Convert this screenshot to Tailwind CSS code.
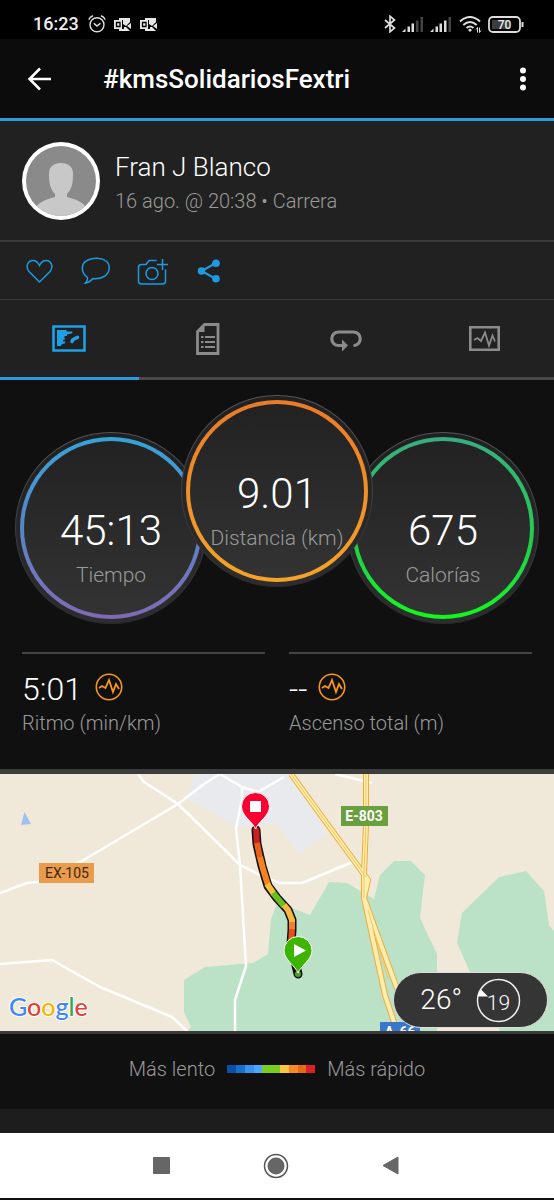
<!DOCTYPE html>
<html lang="es">
<head>
  <meta charset="UTF-8" />
  <meta name="viewport" content="width=device-width, initial-scale=1.0" />
  <title>#kmsSolidariosFextri</title>
  <script src="https://cdn.jsdelivr.net/npm/@tailwindcss/browser@4"></script>
</head>
<body class="bg-black font-['Roboto',sans-serif] font-light text-white min-h-screen flex flex-col">

  <!-- Status bar -->
  <div class="h-[39px] pt-[9px] pl-[33px] pr-[30px] flex items-center justify-between">
    <div class="flex items-center">
      <span class="text-[18px] font-medium leading-5 text-[#eee]">16:23</span>
      <svg class="ml-[9px] w-[18px] h-[18px]" viewBox="0 0 18 18" fill="none" stroke="#ddd" stroke-width="1.4" stroke-linecap="round">
        <circle cx="9" cy="9.7" r="7" />
        <path d="M1 4.2Q2.2 1.8 4.6 1M17 4.2Q15.8 1.8 13.4 1M6.2 8.6L9 11L12 8.6" />
      </svg>
      <svg class="ml-[8px] w-[18px] h-[15px]" viewBox="0 0 18 15">
        <path d="M5 1h11v4l-4 4-3-2V3H5zM17 6v6l-4-3zM5 12h5v-2l2 0 4 4H5z" fill="#e6e6e6" />
        <path d="M0 3h8v9H0z" fill="#e6e6e6" />
        <path d="M2.500 5.500h3.500v4H2.500z" fill="none" stroke="#000" stroke-width="1.300" />
      </svg>
      <svg class="ml-[8px] w-[18px] h-[15px]" viewBox="0 0 18 15">
        <path d="M5 1h11v4l-4 4-3-2V3H5zM17 6v6l-4-3zM5 12h5v-2l2 0 4 4H5z" fill="#e6e6e6" />
        <path d="M0 3h8v9H0z" fill="#e6e6e6" />
        <path d="M2.500 5.500h3.500v4H2.500z" fill="none" stroke="#000" stroke-width="1.300" />
      </svg>
    </div>
    <div class="flex items-center">
      <svg class="w-[12px] h-[18px]" viewBox="0 0 12 18" fill="none" stroke="#ddd" stroke-width="1.7">
        <path d="M1 5l9.500 8L6 16.800V1.200L10.500 5L1 13" />
      </svg>
      <svg class="ml-[6px] w-[22px] h-[15px]" viewBox="0 0 22 15">
        <path d="M0 15L3.500 11.500V15H0zM5.500 9.500h2.500V15H5.500zM9.500 6.500h2.500V15H9.500z" fill="#ddd" />
        <path d="M14 3.500h2.500V15H14zM18.500 0h2.500V15h-2.500z" fill="#444" />
      </svg>
      <svg class="ml-[6px] w-[22px] h-[15px]" viewBox="0 0 22 15">
        <path d="M0 15L3.500 11.500V15H0zM5.500 9.500h2.500V15H5.500zM9.500 6.500h2.500V15H9.500zM14 3.500h2.500V15H14z" fill="#ddd" />
        <path d="M18.500 0h2.500V15h-2.500z" fill="#444" />
      </svg>
      <svg class="ml-[7px] w-[23px] h-[17px]" viewBox="0 0 23 17" fill="none" stroke="#ddd" stroke-width="2">
        <path d="M1 5.500Q11 -3.500 21 5.500M4.300 9Q11 3 17.700 9M7.500 12Q11 9 14.500 12" />
        <path d="M9 14l2-1.500 2 1.500-2 2z" fill="#ddd" stroke="none" />
        <path d="M18.500 16.500v-5l-1.500 2M20.500 11.500v5l1.500-2" stroke-width="1" />
      </svg>
      <svg class="ml-[6px] w-[36px] h-[17px]" viewBox="0 0 36 17">
        <rect x="1" y="1" width="31" height="15" rx="4" fill="none" stroke="#ddd" stroke-width="1.800" />
        <rect x="4" y="4" width="17" height="9" fill="#3c3c3c" />
        <path d="M33.500 6h2v5h-2z" fill="#ddd" />
        <text x="16.500" y="13" text-anchor="middle" font-size="12" font-weight="500" fill="#eee">70</text>
      </svg>
    </div>
  </div>

  <!-- Title bar -->
  <header class="bg-[#0c0c0c] border-b-3 border-[#2a9ad8] h-[82px] pl-[27px] pr-[26px] flex items-center">
    <button type="button" aria-label="Atrás" class="w-6 h-6">
      <svg viewBox="0 0 24 24" fill="none" stroke="#fff" stroke-width="2.500"><path d="M24 12H3M13 1.500L2.500 12L13 22.500" /></svg>
    </button>
    <h1 class="ml-[52px] flex-1 text-[26px] leading-8 font-medium">#kmsSolidariosFextri</h1>
    <button type="button" aria-label="Más opciones" class="w-[10px] h-6">
      <svg viewBox="0 0 10 24" fill="#fff"><circle cx="5" cy="3.500" r="3" /><circle cx="5" cy="12" r="3" /><circle cx="5" cy="20.500" r="3" /></svg>
    </button>
  </header>

  <!-- Athlete -->
  <section class="bg-[#212121] h-[121px] px-[22px] flex items-center border-b-2 border-[#3a3a3a]">
    <svg class="w-[78px] h-[78px] shrink-0" viewBox="0 0 78 78">
      <defs><clipPath id="face"><circle cx="39" cy="39" r="35" /></clipPath></defs>
      <circle cx="39" cy="39" r="39" fill="#fff" />
      <g clip-path="url(#face)">
        <path d="M0 0h78v78H0z" fill="#8a8a8a" />
        <path d="M39 21c-8 0-12 4-12 11 0 9 1 15 6 20v3c-8 2-16 5-20 11l8 8h36l8-8c-4-6-12-9-20-11v-3c5-5 6-11 6-20 0-7-4-11-12-11z" fill="#c8c8c8" />
      </g>
    </svg>
    <div class="ml-[15px] pt-[5px]">
      <h2 class="text-[26px] leading-8">Fran J Blanco</h2>
      <p class="mt-1 text-[20px] leading-7 text-[#9a9a9a]">16 ago. @ 20:38 • Carrera</p>
    </div>
  </section>

  <!-- Actions -->
  <section class="bg-[#212121] h-[58px] pl-[26px] flex items-center border-b border-[#3a3a3a] text-[#1c9be0]">
    <button type="button" aria-label="Me gusta" class="w-[27px] h-[26px]">
      <svg viewBox="0 0 27 26" fill="none" stroke="currentColor" stroke-width="1.500"><path d="M13.500 24L3 13.500C-1 8 2 2.500 7 2.500c3 0 5 2 6.500 5C15 4.500 17 2.500 20 2.500c5 0 8 5.500 4 11z" /></svg>
    </button>
    <button type="button" aria-label="Comentar" class="ml-[28px] w-[30px] h-[28px]">
      <svg viewBox="0 0 30 28" fill="none" stroke="currentColor" stroke-width="1.500"><path d="M6.500 20.500C-1 15 0 6 7 3c6-3 14-2 18 1 5 4 4 11-1 15-4 2.500-8 3-12 2.500-2 2.500-4 4-7.500 4.500 1.500-1.500 2.500-3 2-5.500z" /></svg>
    </button>
    <button type="button" aria-label="Añadir foto" class="ml-[26px] w-[32px] h-[28px]">
      <svg viewBox="0 0 32 28" fill="none" stroke="currentColor" stroke-width="1.500"><path d="M19.500 3.500H12L9 7.500H4.500q-3 0-3 3V24q0 3 3 3h21q3 0 3-3V12.500M25.500 2v11M20 7.500h11" /><circle cx="15" cy="16.500" r="6" /></svg>
    </button>
    <button type="button" aria-label="Compartir" class="ml-[28px] w-[24px] h-[24px]">
      <svg viewBox="0 0 24 24" fill="currentColor"><path d="M19 4L4.500 12L19 20" fill="none" stroke="currentColor" stroke-width="2" /><circle cx="4.500" cy="12" r="3.800" /><circle cx="19" cy="4.300" r="3.800" /><circle cx="19" cy="19.700" r="3.800" /></svg>
    </button>
  </section>

  <!-- Tabs -->
  <nav class="bg-[#212121] grid grid-cols-4 h-[80px] text-[#8b8b8b]">
    <button type="button" aria-label="Resumen" class="flex items-center justify-center border-b-3 border-[#2a9ad8] text-[#1ea0e6]">
      <svg class="w-[34px] h-[27px]" viewBox="0 0 34 27"><path d="M1.500 1.500h31v24h-31z" fill="none" stroke="currentColor" stroke-width="2.600" /><path d="M5 5h9.500v1.500H20q1.500 1-.5 2l-4.500 1v1.500h-2l-1 1.500 1.500 1.500-2.500 1v1.500h2q1 1-.5 2l-2.500.5-1 2H5z" fill="currentColor" /><path d="M20 16.500L21 14.500 25.500 12.300" fill="none" stroke="currentColor" stroke-width="3.600" stroke-linecap="round" stroke-linejoin="round" /></svg>
    </button>
    <button type="button" aria-label="Estadísticas" class="flex items-center justify-center border-b-3 border-[#4a4a4a]">
      <svg class="w-[24px] h-[32px]" viewBox="0 0 24 32"><path d="M8.500 1.500h13.500v29h-20.500v-22z" fill="none" stroke="currentColor" stroke-width="2.800" /><path d="M8.500 1.500V9H1.500z" fill="currentColor" /><path d="M5 14h2.500M9 14h10M5 19h2.500M9 19h10M5 24h2.500M9 24h10" stroke="currentColor" stroke-width="2.200" /></svg>
    </button>
    <button type="button" aria-label="Vueltas" class="flex items-center justify-center border-b-3 border-[#4a4a4a]">
      <svg class="mt-1 w-[32px] h-[22px]" viewBox="0 0 32 22"><path d="M13 15.500H8.500A6.700 6.700 0 0 1 8.500 2H23.500A6.700 6.700 0 0 1 23.500 15.500" fill="none" stroke="currentColor" stroke-width="3.200" /><path d="M12 9.500L18 15.500L12 21.500z" fill="currentColor" /></svg>
    </button>
    <button type="button" aria-label="Gráficos" class="flex items-center justify-center border-b-3 border-[#4a4a4a]">
      <svg class="w-[31px] h-[25px]" viewBox="0 0 31 25" fill="none" stroke="currentColor"><path d="M1.300 1.300h28.400v22.400H1.300z" stroke-width="2.600" /><path d="M5 14l3.500-2 3.500 3 4-8.500 4 13 3.500-10 2.500 6" stroke-width="1.800" /></svg>
    </button>
  </nav>

  <!-- Gauges, the middle one raised over its neighbours -->
  <main class="bg-[#101010] grow">
    <div class="pt-[15px] flex items-start justify-center">
      <div class="mt-[37px] size-48 shrink-0 rounded-full p-px bg-linear-to-b from-[#555354] to-[#28282a]">
        <div class="size-full rounded-full p-[4px] bg-linear-to-b from-[#202021] to-[#2d2d2f]">
          <div class="size-full rounded-full p-[4px] bg-linear-to-b from-[#35a3d8] via-[#5585c8] to-[#8068b4]">
            <div class="size-full rounded-full pt-[68px] text-center bg-linear-to-b from-[#222] to-[#323332]">
              <div class="text-[42px] leading-[44px]">45:13</div>
              <div class="mt-[8px] text-[21px] leading-7 text-[#9a9a9a]">Tiempo</div>
            </div>
          </div>
        </div>
      </div>
      <div class="z-10 -mx-[26px] size-48 shrink-0 rounded-full p-px bg-linear-to-b from-[#55565a] to-[#28282a]">
        <div class="size-full rounded-full p-[4px] bg-linear-to-b from-[#202021] to-[#2d2d2f]">
          <div class="size-full rounded-full p-[4px] bg-linear-to-b from-[#ea7a28] to-[#f5a328]">
            <div class="size-full rounded-full pt-[68px] text-center bg-linear-to-b from-[#222] to-[#323332]">
              <div class="text-[42px] leading-[44px]">9.01</div>
              <div class="mt-[8px] text-[21px] leading-7 text-[#9a9a9a] whitespace-nowrap">Distancia (km)</div>
            </div>
          </div>
        </div>
      </div>
      <div class="mt-[37px] size-48 shrink-0 rounded-full p-px bg-linear-to-b from-[#555354] to-[#28282a]">
        <div class="size-full rounded-full p-[4px] bg-linear-to-b from-[#202021] to-[#2d2d2f]">
          <div class="size-full rounded-full p-[4px] bg-linear-to-b from-[#38ac80] via-[#20d045] via-60% to-[#10f818]">
            <div class="size-full rounded-full pt-[68px] text-center bg-linear-to-b from-[#222] to-[#323332]">
              <div class="text-[42px] leading-[44px]">675</div>
              <div class="mt-[8px] text-[21px] leading-7 text-[#9a9a9a]">Calorías</div>
            </div>
          </div>
        </div>
      </div>
    </div>

    <div class="mt-[28px] px-[22px] pb-[32px] grid grid-cols-2 gap-6">
      <div class="border-t-2 border-[#444] pt-[15px]">
        <div class="flex items-center text-[32px] leading-10">5:01
          <svg class="ml-[13px] mb-1 w-[28px] h-[28px]" viewBox="0 0 28 28" fill="none" stroke="#f7981d"><circle cx="14" cy="14" r="12.700" stroke-width="1.600" /><path d="M4 15l3-2 3.500 2L14 7l4 12 3-8 3 5" stroke-width="1.800" /></svg>
        </div>
        <div class="text-[20px] leading-7 text-[#9a9a9a]">Ritmo (min/km)</div>
      </div>
      <div class="border-t-2 border-[#444] pt-[15px]">
        <div class="flex items-center text-[32px] leading-10">--
          <svg class="ml-[11px] mb-1 w-[28px] h-[28px]" viewBox="0 0 28 28" fill="none" stroke="#f7981d"><circle cx="14" cy="14" r="12.700" stroke-width="1.600" /><path d="M4 15l3-2 3.500 2L14 7l4 12 3-8 3 5" stroke-width="1.800" /></svg>
        </div>
        <div class="text-[20px] leading-7 text-[#9a9a9a]">Ascenso total (m)</div>
      </div>
    </div>
  </main>

  <!-- Map -->
  <section class="relative border-t-5 border-b-3 border-[#3c3c3c]">
    <svg class="block w-full h-[257px]" viewBox="0 0 554 257" preserveAspectRatio="xMidYMid slice" fill="none">
      <path d="M0 0h554v257H0z" fill="#f0e9d9" />
      <path d="M194 0L188 26L212 38L236 53L277 50L299 80L326 59L292 0z" fill="#e8eaee" />
      <path d="M24.500 38L21 51L31 50z" fill="#a3bff0" />
      <!-- woods -->
      <g fill="#bbe2c6">
        <path d="M277 130L271 145L268 180L253 189L205 193L184 206V238L191 253L188 257H437V180L420 144L425 101L411 87H394L380 101L374 125L347 109L329 108L310 141L297 136z" />
        <path d="M554 157L549 151L544 117L526 97L499 103L462 139L457 169L470 198L500 257H554z" />
      </g>
      <!-- minor roads -->
      <g stroke="#fff" stroke-width="2.500" stroke-linejoin="round">
        <path d="M138 0L144 8L178 30L240 91L262 102L280 109L302 109L355 87" />
        <path d="M0 119L27 109L38 108L82 87L178 30L204 10L220 0L242 13L258 18L284 3" />
        <path d="M242 12L242 25L236 55L240 91L246 192L235 226V257" />
        <path d="M0 190L52 186L100 213L172 243L187 257M335 0L372 9" />
      </g>
      <!-- motorways -->
      <g stroke-linejoin="round">
        <path d="M291 0L312 29L355 88L368 106L364 124M366 0V50L364 100V124L385 221L397 257M364 124L388 190L402 228" stroke="#f0ab3a" stroke-width="6" />
        <path d="M291 0L312 29L355 88L368 106L364 124M366 0V50L364 100V124L385 221L397 257M364 124L388 190L402 228" stroke="#fdeeb0" stroke-width="4" />
        <path d="M291 0L312 29L355 88L366 103M366 0V50L364 100V124M368 136L388 205" stroke="#f3c65a" stroke-width="1" />
      </g>
      <!-- track coloured by pace -->
      <g stroke-linejoin="round">
        <path d="M256 56L257 70L262 92L268 112L277 124L288 136L292 146L292 156L291 170L298 200" stroke="#111" stroke-width="9" stroke-linecap="round" />
        <path d="M256 54L257 70" stroke="#cc2020" stroke-width="6" />
        <path d="M257 69L260 84" stroke="#e6601a" stroke-width="6" />
        <path d="M260 83L263 95L268 111" stroke="#f5821f" stroke-width="6" />
        <path d="M267 110L274 120" stroke="#f9bd38" stroke-width="6" />
        <path d="M273 119L284 132" stroke="#6abf1c" stroke-width="6" />
        <path d="M284 131L288 136L292 146V149" stroke="#f9b640" stroke-width="6" />
        <path d="M292 148V156" stroke="#f08030" stroke-width="6" />
        <path d="M292 155L291 170" stroke="#e6501a" stroke-width="6" />
        <circle cx="298" cy="200" r="3" fill="#55a02a" />
      </g>
      <path d="M255.500 55C253 48 241.500 42 241.500 32.500a14 14 0 0 1 28 0C269.500 42 258 48 255.500 55z" fill="#fa0030" stroke="#fff" stroke-width="1" />
      <path d="M250 27h11v11h-11z" fill="#fff" />
      <path d="M298 199C295.500 192 284 186 284 176.500a14 14 0 0 1 28 0C312 186 300.500 192 298 199z" fill="#3cb400" stroke="#fff" stroke-width="1" />
      <path d="M294 170v13l12-6.500z" fill="#fff" />
      <!-- road shields -->
      <g font-size="14" font-weight="500" text-anchor="middle">
        <path d="M39 89h55v20H39z" fill="#eb9b4c" />
        <text x="67" y="104" font-weight="400" fill="#3b2a14">EX-105</text>
        <path d="M341 32h47v20h-47z" fill="#699f3e" />
        <text x="364" y="47" font-weight="700" fill="#fff">E-803</text>
        <path d="M380 248h40v9h-40z" fill="#3a76c9" />
        <text x="400" y="263" font-weight="700" fill="#fff">A-66</text>
      </g>
    </svg>
    <div class="absolute left-[9px] bottom-[9px] font-['Lato',sans-serif] font-medium text-[25px] leading-8 [-webkit-text-stroke:2px_white] [paint-order:stroke_fill]"><span class="text-[#4285f4]">G</span><span class="text-[#db4437]">o</span><span class="text-[#f4b400]">o</span><span class="text-[#4285f4]">g</span><span class="text-[#34a853]">l</span><span class="text-[#db4437]">e</span></div>
    <div class="absolute right-[6px] bottom-[3px] h-[56px] pl-[26px] pr-[26px] rounded-full bg-[#353535] border border-[#ddd] flex items-center">
      <span class="text-[28px] leading-8">26°</span>
      <svg class="ml-[14px] w-[45px] h-[45px]" viewBox="0 0 45 45"><circle cx="22.500" cy="22.500" r="21" fill="none" stroke="#eee" stroke-width="1.500" /><path d="M5 11.500L1.500 18.500H12z" fill="#fff" /><text x="22.500" y="32" text-anchor="middle" font-size="21" font-weight="300" fill="#fff">19</text></svg>
    </div>
  </section>

  <!-- Pace legend -->
  <section class="bg-[#101010] h-[75px] pb-[6px] flex items-center justify-center text-[20px] leading-7 text-[#9a9a9a]">
    <span>Más lento</span>
    <div class="mx-3 w-[88px] h-2 grid grid-cols-10">
      <i class="bg-[#0a50a8]"></i><i class="bg-[#1a6fcc]"></i><i class="bg-[#3a92f0]"></i><i class="bg-[#4fa6ff]"></i><i class="bg-[#7acc1e]"></i><i class="bg-[#7acc1e]"></i><i class="bg-[#fdc544]"></i><i class="bg-[#f9882a]"></i><i class="bg-[#ea6812]"></i><i class="bg-[#d62226]"></i>
    </div>
    <span>Más rápido</span>
  </section>
  <div class="h-6 bg-[#1d1d1d]"></div>

  <!-- System navigation -->
  <nav class="bg-white h-[67px] border-b-2 border-[#111] pl-[153px] pr-[155px] flex items-center justify-between">
    <button type="button" aria-label="Recientes" class="size-[17px] rounded-[1px] bg-[#666]"></button>
    <button type="button" aria-label="Inicio" class="size-[26px]">
      <svg viewBox="0 0 26 26"><circle cx="13" cy="13" r="11.500" fill="none" stroke="#555" stroke-width="1.500" /><circle cx="13" cy="13" r="8.500" fill="#666" /></svg>
    </button>
    <button type="button" aria-label="Volver" class="w-[17px] h-[19px]">
      <svg viewBox="0 0 17 19"><path d="M16 1v17L1 9.500z" fill="#666" stroke="#666" stroke-linejoin="round" /></svg>
    </button>
  </nav>
</body>
</html>
